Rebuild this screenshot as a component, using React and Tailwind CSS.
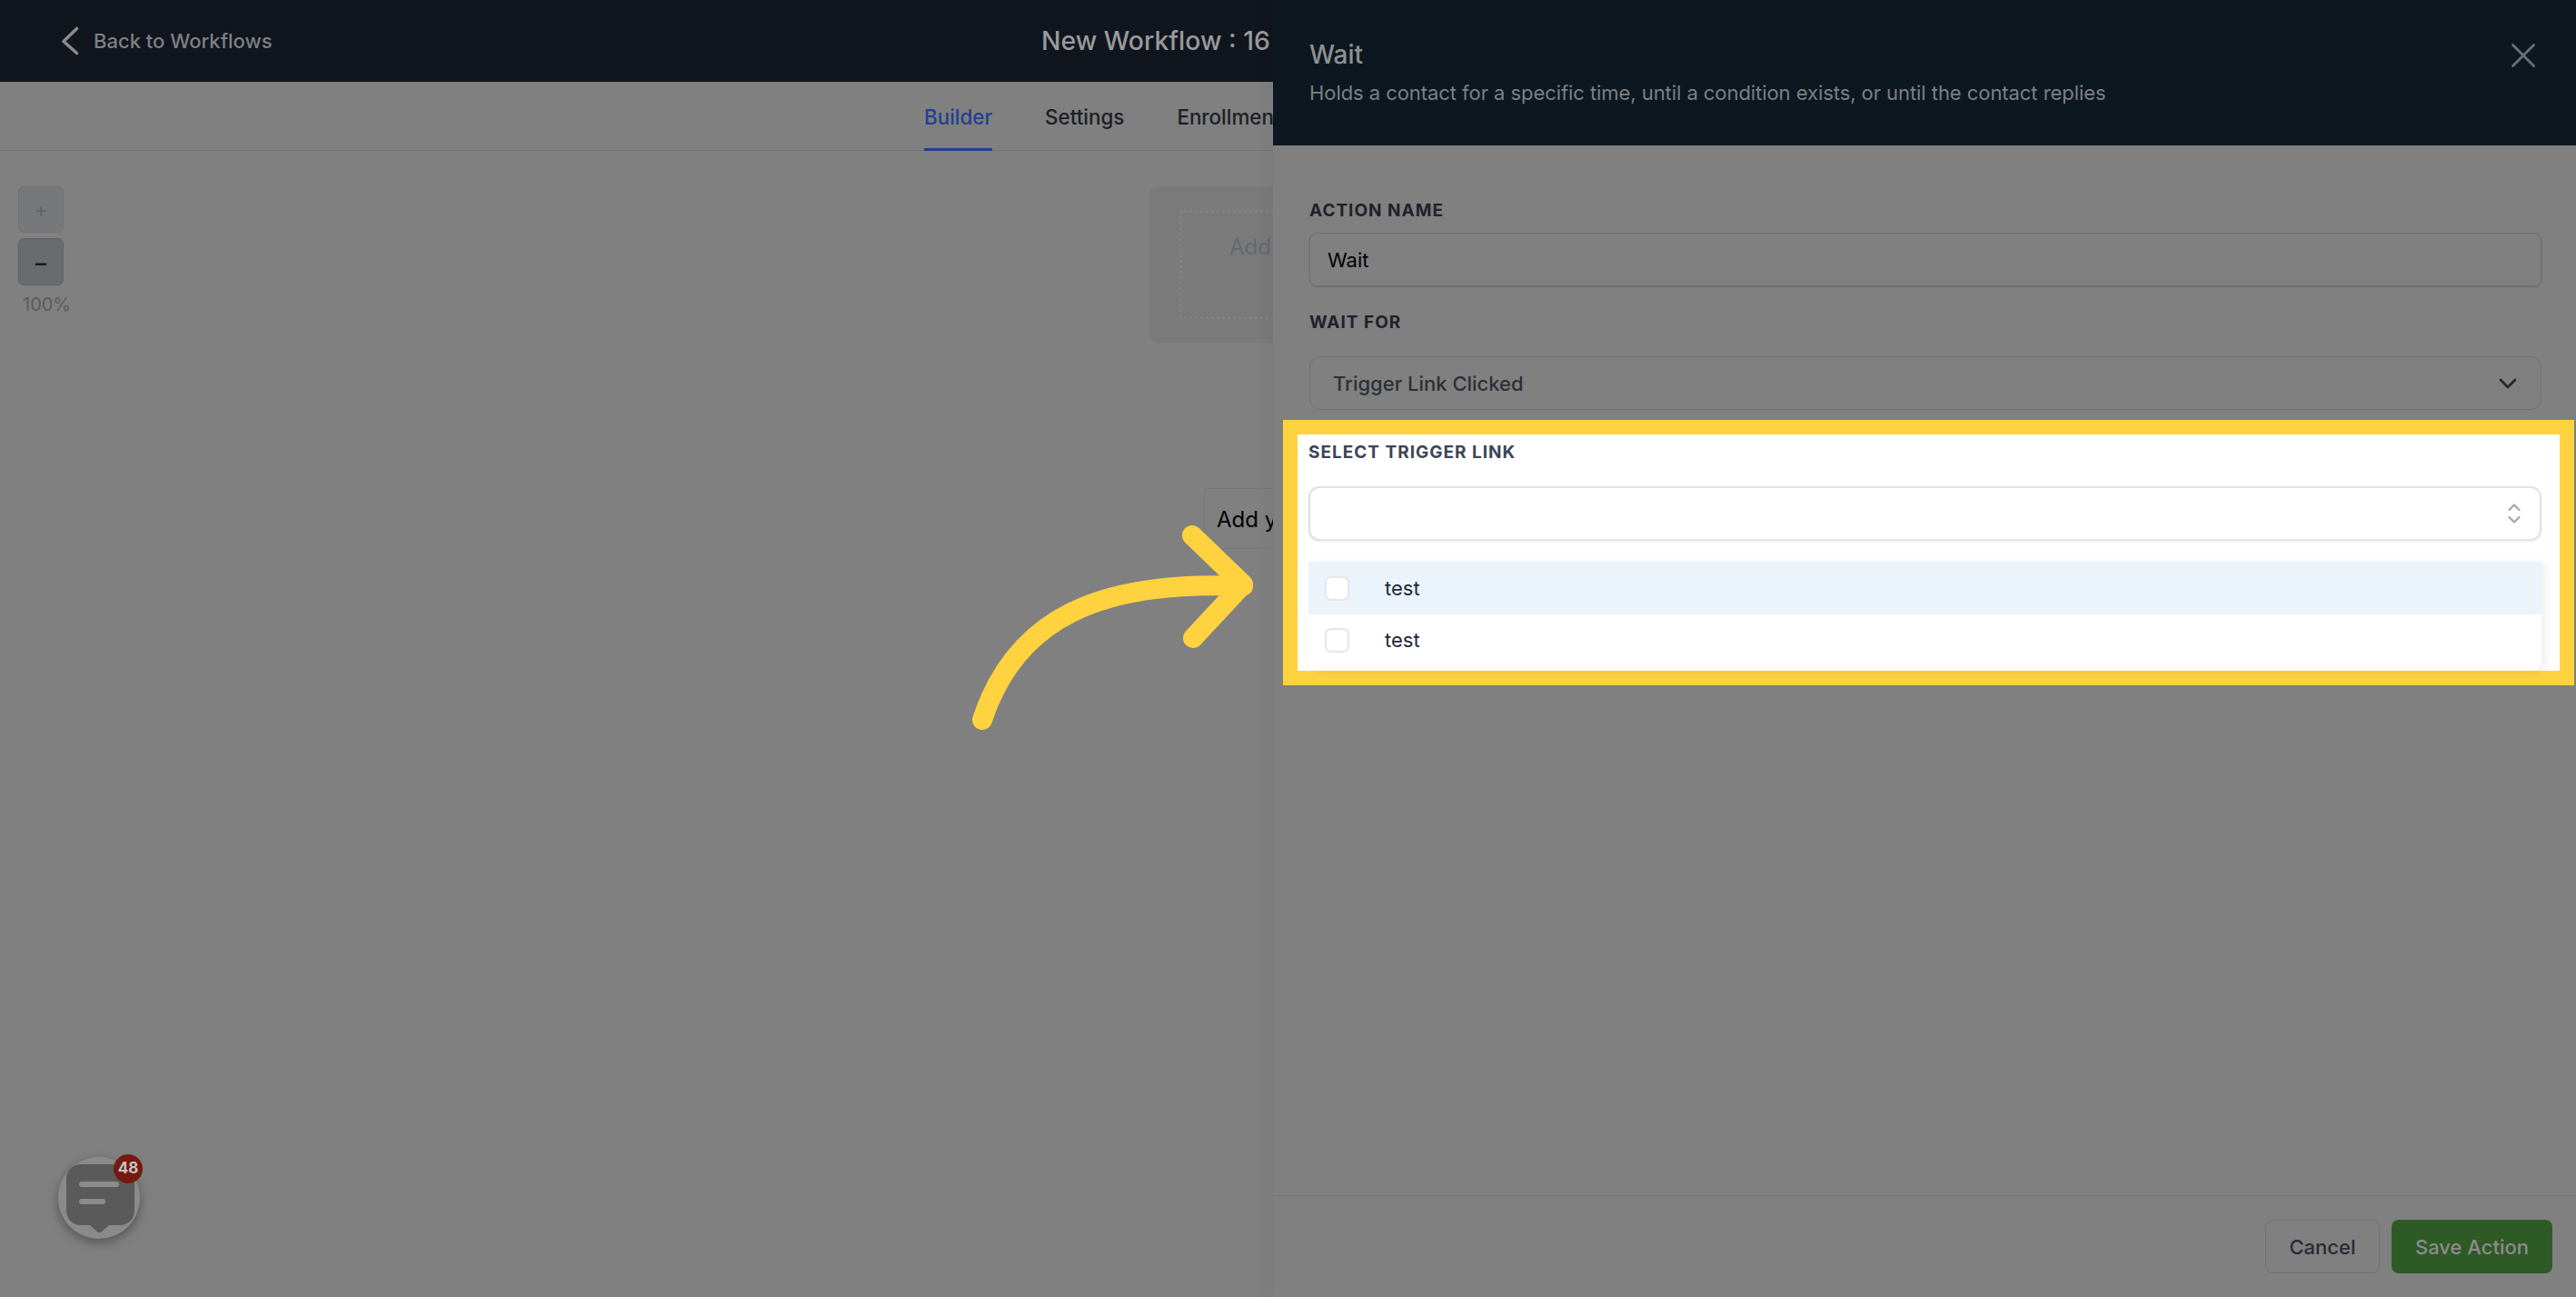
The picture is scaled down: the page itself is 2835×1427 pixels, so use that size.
import React from 'react';
import { ChevronDown, X } from 'lucide-react';

const font = { fontFamily: 'Inter, "Liberation Sans", sans-serif' };

const FieldLabel = ({ children, className = '' }) => (
  <div className={`h-[24px] pt-[1px] text-[19px] leading-[24px] font-bold tracking-[1px] ${className}`}>{children}</div>
);

const ChatWidget = () => (
  <div className="absolute left-[64px] top-[1273px] w-[90px] h-[90px] rounded-full bg-[#8a8a8a] shadow-[0_4px_12px_rgba(0,0,0,0.35)]">
    <svg className="absolute left-[9px] top-[8px]" width="75" height="75" viewBox="0 0 75 75">
      <path d="M16 0H59C68 0 75 7 75 16V51C75 60 68 67 59 67H47L39 74C37.5 75.500 35.500 75.500 34 74L26 67H16C7 67 0 60 0 51V16C0 7 7 0 16 0Z" fill="#5a5a5a" />
      <rect x="14" y="19" width="44" height="6" rx="3" fill="#8c8c8c" />
      <rect x="14" y="38" width="29" height="6" rx="3" fill="#8c8c8c" />
    </svg>
    <div className="absolute left-[61px] top-[-3px] w-[32px] h-[32px] rounded-full bg-[#741a10] flex items-center justify-center text-[17px] font-bold text-[#c4c4c4]">
      48
    </div>
  </div>
);

const TriggerRow = ({ active }) => (
  <div className={`flex items-center pl-[18px] ${active ? 'h-[58px] bg-[#ebf4fb]' : 'h-[62px] pb-[6px] bg-white'}`}>
    <span className="w-[27px] h-[27px] rounded-[7px] border-2 border-[#e5e7eb] bg-white" />
    <span className="ml-[39px] text-[22px] text-[#1f2937]">test</span>
  </div>
);

export default function App() {
  return (
    <div className="relative w-full h-[1427px] overflow-hidden bg-[#808080]" style={font}>
      {/* Top bar */}
      <header className="h-[90px] bg-[#10151e] flex items-center pl-[67px]">
        <svg width="20" height="32" viewBox="0 0 20 32" fill="none">
          <path d="M17.500 2.500L3 16.500L17.500 29.500" stroke="#8a8a8a" strokeWidth="3.600" strokeLinecap="round" strokeLinejoin="round" />
        </svg>
        <span className="ml-[16px] w-[195px] text-[22px] font-medium text-[#7f8084] whitespace-nowrap">Back to Workflows</span>
        <span className="ml-[848px] text-[28.400px] font-medium text-[#9a9a9a] whitespace-nowrap">New Workflow : 16</span>
      </header>

      {/* Tabs */}
      <nav className="h-[76px] border-b border-[#747474] flex gap-[58px] pl-[1017px] text-[22.400px] font-medium text-[#1c1f26]">
        <div className="h-[76px] pt-[22px] border-b-[3px] border-[#233f92] -mb-px text-[#233f92]">Builder</div>
        <div className="pt-[22px]">Settings</div>
        <div className="pt-[22px]">Enrollment</div>
      </nav>

      {/* Zoom controls */}
      <div className="pt-[39px] pl-[20px] flex flex-col w-[80px] gap-[6px]">
        <button className="h-[51px] w-[50px] rounded-[6px] border border-[#707173] bg-[#777879] text-[24px] font-light text-[#5c5e62]">+</button>
        <button className="h-[52px] w-[50px] rounded-[6px] border border-[#606265] bg-[#696b6d] text-[26px] font-medium text-[#17191d]">−</button>
        <span className="pl-[5px] text-[20px] text-[#595b60]">100%</span>
      </div>

      {/* Canvas nodes */}
      <div className="absolute left-[1264px] top-[205px] w-[300px] h-[172px] rounded-[12px] bg-[#7a7a7a] p-[26px_0_26px_34px]">
        <div className="h-[120px] border-[3px] border-dotted border-[#828282] pl-[52px] pt-[20px] text-[24px] text-[#65686f]">Add</div>
      </div>
      <div className="absolute left-[1325px] top-[537px] w-[300px] h-[67px] rounded-[6px] border border-[#777777] pl-[13px] pt-[17px] text-[24px] leading-[34px] text-black">
        Add your
      </div>
      <ChatWidget />

      {/* Arrow */}
      <svg className="absolute left-[1060px] top-[570px]" width="330" height="245" viewBox="1060 570 330 245" fill="none">
        <path d="M1081 792C1118 680 1210 638 1368 645M1312 589L1368 643L1313 702" stroke="#ffd23f" strokeWidth="22" strokeLinecap="round" strokeLinejoin="round" />
      </svg>

      {/* Slide-over panel */}
      <aside className="absolute top-0 right-0 bottom-0 w-[1434px] flex flex-col bg-[#808080] shadow-[-8px_0_14px_rgba(0,0,0,0.04)]">
        <div className="h-[160px] shrink-0 bg-[#0c1720] pl-[40px] pr-[46px] pt-[42px] relative">
          <div className="text-[28px] leading-[36px] font-medium text-[#8f9193]">Wait</div>
          <div className="mt-[10px] text-[22px] leading-[28px] tracking-[-0.06px] text-[#7d8084]">
            Holds a contact for a specific time, until a condition exists, or until the contact replies
          </div>
          <X size={46} strokeWidth={1.500} className="absolute top-[38px] right-[35px] text-[#6b6e7a]" />
        </div>

        <div className="flex-1 pl-[40px] pr-[38px] pt-[59px]">
          <FieldLabel className="text-[#1f222a]">ACTION NAME</FieldLabel>
          <div className="mt-[13px] h-[59px] rounded-[8px] border border-[#6f7074] shadow-[0_1px_2px_rgba(0,0,0,0.15)] flex items-center pt-[1px] pl-[19px] text-[22px] text-black">
            Wait
          </div>

          <FieldLabel className="mt-[27px] text-[#1f222a]">WAIT FOR</FieldLabel>
          <div className="mt-[26px] h-[59px] rounded-[12px] border border-[#727275] flex items-center justify-between pl-[25px] pr-[20px] text-[22px] font-medium text-[#2b3038]">
            <span className="pt-[1px]">Trigger Link Clicked</span>
            <ChevronDown size={32} strokeWidth={2} className="text-[#24272f]" />
          </div>

          {/* Highlighted field */}
          <section className="mt-[11px] -ml-[29px] -mr-[36px] border-[16px] border-[#ffd23f] bg-white pl-[12px] pr-[20px] pt-[7px]">
            <FieldLabel className="text-[#3b4557]">SELECT TRIGGER LINK</FieldLabel>
            <div className="mt-[26px] h-[60px] rounded-[12px] border-2 border-[#e2e2e4] bg-white shadow-[0_1px_3px_rgba(0,0,0,0.08)] flex items-center justify-end pr-[21px]">
              <svg width="14" height="24" viewBox="0 0 14 24" fill="none" stroke="#a0a6b5" strokeWidth="2.200" strokeLinecap="round" strokeLinejoin="round">
                <path d="M1.500 8L7 2.500L12.500 8" />
                <path d="M1.500 16L7 21.500L12.500 16" />
              </svg>
            </div>
            <div className="mt-[23px] rounded-b-[10px] overflow-hidden shadow-[4px_2px_10px_rgba(0,0,0,0.07)]">
              <TriggerRow active />
              <TriggerRow />
            </div>
          </section>
        </div>

        <footer className="h-[112px] shrink-0 border-t border-[#777777] flex justify-end gap-[13px] pt-[26px] pr-[26px] text-[22px] font-medium">
          <button className="w-[126px] h-[59px] pt-[1px] rounded-[8px] border border-[#717171] text-[#262b36]">Cancel</button>
          <button className="w-[177px] h-[59px] pt-[1px] rounded-[8px] bg-[#2e5a25] text-[#8c8c8c]">Save Action</button>
        </footer>
      </aside>
    </div>
  );
}
